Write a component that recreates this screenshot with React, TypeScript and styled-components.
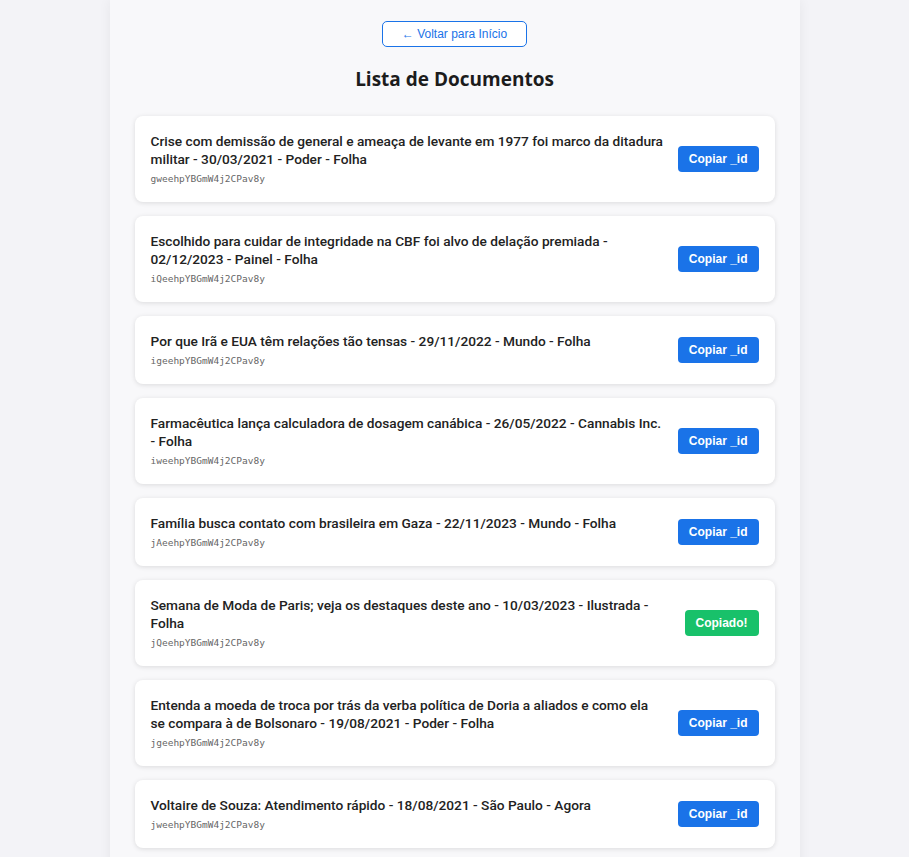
import React from "react";
import styled, { createGlobalStyle } from "styled-components";

const Global = createGlobalStyle`
  html, body { margin: 0; padding: 0; background: #f3f3f7; }
  body { font-family: Roboto, "Open Sans", sans-serif; }
`;

const Page = styled.div`
  width: 640px;
  margin: 0 auto;
  padding: 21px 25px 20px;
  background: #f8f8fa;
  box-shadow: 0 0 12px rgba(0, 0, 0, 0.06);
  min-height: 100vh;
  box-sizing: content-box;
`;

const Top = styled.div`
  display: flex;
  flex-direction: column;
  align-items: center;
`;

const BackButton = styled.button`
  font-family: "Liberation Sans", Arial, sans-serif;
  font-size: 12px;
  color: #1a73e8;
  background: #fff;
  border: 1px solid #1a73e8;
  border-radius: 5px;
  padding: 5px 18.5px;
  cursor: pointer;
`;

const Title = styled.h2`
  font-family: "Open Sans", sans-serif;
  font-size: 19px;
  font-weight: 700;
  color: #1c1c1c;
  margin: 19px 0 24px;
`;

const List = styled.div`
  display: flex;
  flex-direction: column;
  gap: 14px;
`;

const Card = styled.div`
  display: flex;
  align-items: center;
  gap: 12px;
  background: #fff;
  border-radius: 8px;
  box-shadow: 0 1px 5px rgba(0, 0, 0, 0.12);
  padding: 16px;
`;

const Info = styled.div`
  flex: 1;
  min-width: 0;
`;

const DocTitle = styled.div`
  font-size: 13.7px;
  line-height: 18px;
  font-weight: 500;
  color: #222;
`;

const DocId = styled.div`
  font-family: "DejaVu Sans Mono", monospace;
  font-size: 9.5px;
  line-height: 14px;
  color: #666;
  margin-top: 4px;
`;

const CopyButton = styled.button<{ $copied?: boolean }>`
  font-family: "Liberation Sans", Arial, sans-serif;
  font-size: 12px;
  font-weight: 700;
  color: #fff;
  background: ${(p) => (p.$copied ? "#18c16a" : "#1a73e8")};
  border: none;
  border-radius: 4px;
  padding: 6px 11px;
  flex-shrink: 0;
  cursor: pointer;
`;

const docs = [
  { t: "Crise com demissão de general e ameaça de levante em 1977 foi marco da ditadura militar - 30/03/2021 - Poder - Folha", id: "gweehpYBGmW4j2CPav8y" },
  { t: "Escolhido para cuidar de integridade na CBF foi alvo de delação premiada - 02/12/2023 - Painel - Folha", id: "iQeehpYBGmW4j2CPav8y" },
  { t: "Por que Irã e EUA têm relações tão tensas - 29/11/2022 - Mundo - Folha", id: "igeehpYBGmW4j2CPav8y" },
  { t: "Farmacêutica lança calculadora de dosagem canábica - 26/05/2022 - Cannabis Inc. - Folha", id: "iweehpYBGmW4j2CPav8y" },
  { t: "Família busca contato com brasileira em Gaza - 22/11/2023 - Mundo - Folha", id: "jAeehpYBGmW4j2CPav8y" },
  { t: "Semana de Moda de Paris; veja os destaques deste ano - 10/03/2023 - Ilustrada - Folha", id: "jQeehpYBGmW4j2CPav8y", copied: true },
  { t: "Entenda a moeda de troca por trás da verba política de Doria a aliados e como ela se compara à de Bolsonaro - 19/08/2021 - Poder - Folha", id: "jgeehpYBGmW4j2CPav8y" },
  { t: "Voltaire de Souza: Atendimento rápido - 18/08/2021 - São Paulo - Agora", id: "jweehpYBGmW4j2CPav8y" },
];

export default function App() {
  return (
    <>
      <Global />
      <Page>
        <Top>
          <BackButton>← Voltar para Início</BackButton>
          <Title>Lista de Documentos</Title>
        </Top>
        <List>
          {docs.map((d) => (
            <Card key={d.id}>
              <Info>
                <DocTitle>{d.t}</DocTitle>
                <DocId>{d.id}</DocId>
              </Info>
              <CopyButton $copied={d.copied}>{d.copied ? "Copiado!" : "Copiar _id"}</CopyButton>
            </Card>
          ))}
        </List>
      </Page>
    </>
  );
}
